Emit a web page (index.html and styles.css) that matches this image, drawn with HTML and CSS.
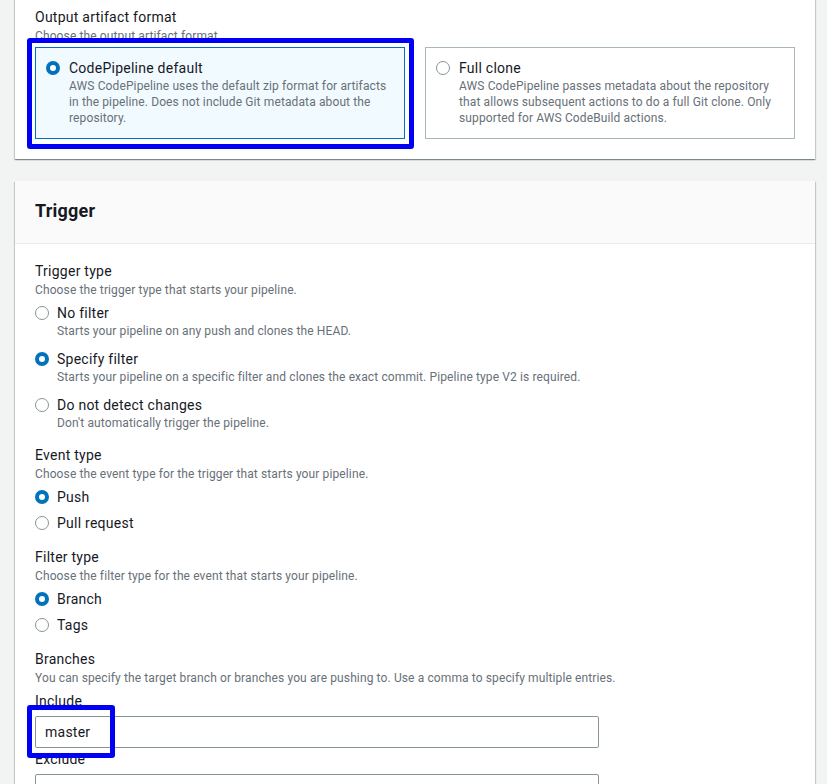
FILE: index.html
```html
<!DOCTYPE html>
<html lang="en">

<head>
    <meta charset="UTF-8">
    <meta name="viewport" content="width=device-width, initial-scale=1.0">
    <title>Source settings</title>
    <link rel="stylesheet" href="styles.css">
</head>

<body>
    <div class="tarjeta tarjeta-cortada">
        <div class="cuerpo">
            <div class="campo">
                <div class="etiqueta">Output artifact format</div>
                <div class="descripcion">Choose the output artifact format</div>
                <div class="mosaicos">
                    <div class="mosaico activo marcado">
                        <div class="opcion">
                            <span class="radio sel"></span>
                            <span class="opcion-texto">CodePipeline default</span>
                        </div>
                        <div class="opcion-desc">AWS CodePipeline uses the default zip format for artifacts in the pipeline. Does not include Git metadata about the repository.</div>
                    </div>
                    <div class="mosaico">
                        <div class="opcion">
                            <span class="radio"></span>
                            <span class="opcion-texto">Full clone</span>
                        </div>
                        <div class="opcion-desc">AWS CodePipeline passes metadata about the repository that allows subsequent actions to do a full Git clone. Only supported for AWS CodeBuild actions.</div>
                    </div>
                </div>
            </div>
        </div>
    </div>

    <div class="tarjeta">
        <div class="cabecera">
            <h2>Trigger</h2>
        </div>
        <div class="cuerpo">
            <div class="campo">
                <div class="etiqueta">Trigger type</div>
                <div class="descripcion">Choose the trigger type that starts your pipeline.</div>
                <div class="grupo">
                    <div class="item con-desc">
                        <div class="opcion"><span class="radio"></span><span class="opcion-texto">No filter</span></div>
                        <div class="opcion-desc">Starts your pipeline on any push and clones the HEAD.</div>
                    </div>
                    <div class="item con-desc">
                        <div class="opcion"><span class="radio sel"></span><span class="opcion-texto">Specify filter</span></div>
                        <div class="opcion-desc">Starts your pipeline on a specific filter and clones the exact commit. Pipeline type V2 is required.</div>
                    </div>
                    <div class="item con-desc">
                        <div class="opcion"><span class="radio"></span><span class="opcion-texto">Do not detect changes</span></div>
                        <div class="opcion-desc">Don't automatically trigger the pipeline.</div>
                    </div>
                </div>
            </div>

            <div class="campo">
                <div class="etiqueta">Event type</div>
                <div class="descripcion">Choose the event type for the trigger that starts your pipeline.</div>
                <div class="grupo">
                    <div class="item">
                        <div class="opcion"><span class="radio sel"></span><span class="opcion-texto">Push</span></div>
                    </div>
                    <div class="item">
                        <div class="opcion"><span class="radio"></span><span class="opcion-texto">Pull request</span></div>
                    </div>
                </div>
            </div>

            <div class="campo">
                <div class="etiqueta">Filter type</div>
                <div class="descripcion">Choose the filter type for the event that starts your pipeline.</div>
                <div class="grupo">
                    <div class="item">
                        <div class="opcion"><span class="radio sel"></span><span class="opcion-texto">Branch</span></div>
                    </div>
                    <div class="item">
                        <div class="opcion"><span class="radio"></span><span class="opcion-texto">Tags</span></div>
                    </div>
                </div>
            </div>

            <div class="campo">
                <div class="etiqueta">Branches</div>
                <div class="descripcion">You can specify the target branch or branches you are pushing to. Use a comma to specify multiple entries.</div>
                <div class="sub-etiqueta">Include</div>
                <div class="entrada marcada-entrada">master</div>
                <div class="sub-etiqueta pegada">Exclude</div>
                <div class="entrada"></div>
            </div>
        </div>
    </div>
</body>

</html>
```

FILE: styles.css
```css
body {
    font-family: Roboto, "Liberation Sans", sans-serif;
    margin: 0;
    padding: 0 12px 40px 15px;
    background-color: #f2f3f3;
    color: #16191f;
    font-size: 14px;
    letter-spacing: 0.25px;
}

.tarjeta {
    width: 800px;
    background-color: #fff;
    box-shadow: 0 1px 1px 0 rgba(0, 28, 36, .3), 1px 1px 1px 0 rgba(0, 28, 36, .15), -1px 1px 1px 0 rgba(0, 28, 36, .15);
    margin-bottom: 22px;
}

.tarjeta-cortada {
    margin-top: -4px;
}

.tarjeta-cortada .cuerpo {
    padding-top: 10px;
}

.cabecera {
    background-color: #fafafa;
    border-bottom: 1px solid #eaeded;
    padding: 19px 20px 21px;
}

h2 {
    font-size: 18px;
    line-height: 22px;
    font-weight: 700;
    margin: 0;
    letter-spacing: 0.2px;
}

.cuerpo {
    padding: 16px 20px 20px;
}

.campo {
    margin-bottom: 13px;
}

.campo:last-child {
    margin-bottom: 0;
}

.etiqueta {
    line-height: 22px;
}

.descripcion {
    font-size: 12px;
    line-height: 16px;
    color: #687078;
    letter-spacing: 0.12px;
}

.sub-etiqueta {
    line-height: 22px;
    margin-top: 4px;
}

.sub-etiqueta.pegada {
    margin-top: 0;
}

.mosaicos {
    display: flex;
    gap: 20px;
    margin-top: 3px;
}

.mosaico {
    position: relative;
    flex: 1;
    border: 1px solid #aab7b8;
    padding: 10px 14px 12px 10px;
    min-height: 67px;
}

.activo {
    border-color: #0073bb;
    background-color: #f1faff;
}

/* recuadros azules de la captura */
.marcado::after,
.marcada-entrada::after {
    content: "";
    position: absolute;
    border: 5px solid #0000f5;
    border-radius: 3px;
}

.marcado::after {
    left: -9px;
    top: -10px;
    right: -10px;
    bottom: -11px;
}

.marcada-entrada::after {
    left: -9px;
    top: -12px;
    width: 78px;
    height: 43px;
}

.opcion {
    display: flex;
    align-items: center;
    gap: 9px;
    line-height: 20px;
}

.opcion-desc {
    font-size: 12px;
    line-height: 16px;
    color: #687078;
    padding-left: 23px;
    letter-spacing: 0.12px;
}

.grupo .opcion {
    gap: 8px;
}

.grupo .opcion-desc {
    padding-left: 22px;
}

.radio {
    width: 14px;
    height: 14px;
    box-sizing: border-box;
    border-radius: 50%;
    border: 1.5px solid #879596;
    background-color: #fff;
    flex-shrink: 0;
}

.radio.sel {
    border: 4px solid #0073bb;
}

.grupo {
    display: flex;
    flex-direction: column;
    gap: 6px;
    margin-top: 5px;
}

.con-desc {
    padding-bottom: 4px;
}

.con-desc:last-child {
    padding-bottom: 0;
}

.entrada {
    position: relative;
    width: 564px;
    height: 32px;
    box-sizing: border-box;
    border: 1px solid #879596;
    border-radius: 2px;
    margin-top: 4px;
    padding: 0 9px;
    line-height: 30px;
}

.sub-etiqueta.pegada + .entrada {
    margin-top: 4px;
}
```
